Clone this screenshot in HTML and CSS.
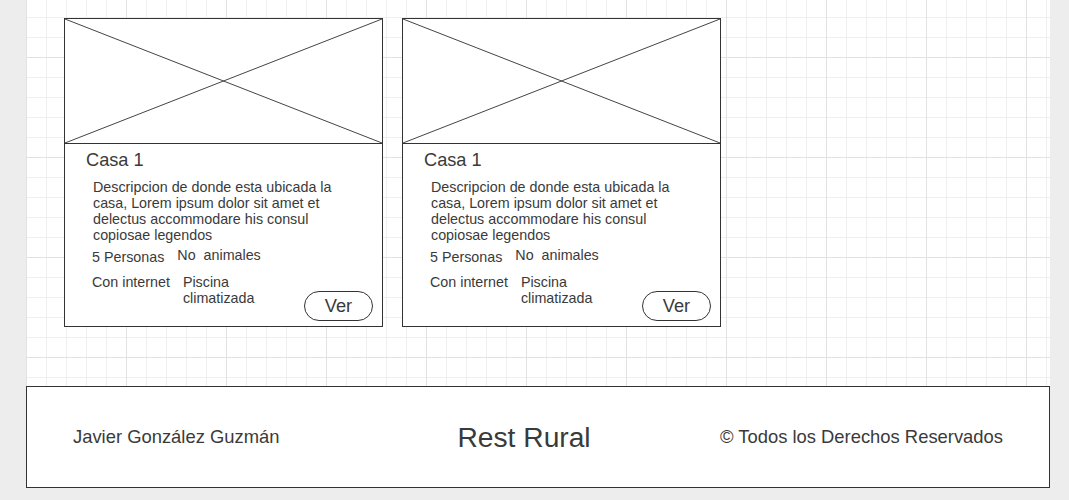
FILE: index.html
```html
<!DOCTYPE html>
<html lang="es">
<head>
<meta charset="utf-8">
<title>Rest Rural</title>
<link rel="stylesheet" href="styles.css">
</head>
<body>
<div class="page">
  <main class="cards">
    <article class="card">
      <div class="thumb">
        <svg viewBox="0 0 100 100" preserveAspectRatio="none" width="100%" height="100%">
          <line x1="0" y1="0" x2="100" y2="100" vector-effect="non-scaling-stroke"/>
          <line x1="100" y1="0" x2="0" y2="100" vector-effect="non-scaling-stroke"/>
        </svg>
      </div>
      <div class="card-body">
        <h2 class="title">Casa 1</h2>
        <p class="desc">Descripcion de donde esta ubicada la casa, Lorem ipsum dolor sit amet et delectus accommodare his consul copiosae legendos</p>
        <div class="row row-one">
          <span class="feat feat-low">5 Personas</span>
          <span class="feat">No&nbsp; animales</span>
        </div>
        <div class="row row-two">
          <span class="feat">Con internet</span>
          <span class="feat feat-wrap">Piscina climatizada</span>
          <button class="btn">Ver</button>
        </div>
      </div>
    </article>
    <article class="card">
      <div class="thumb">
        <svg viewBox="0 0 100 100" preserveAspectRatio="none" width="100%" height="100%">
          <line x1="0" y1="0" x2="100" y2="100" vector-effect="non-scaling-stroke"/>
          <line x1="100" y1="0" x2="0" y2="100" vector-effect="non-scaling-stroke"/>
        </svg>
      </div>
      <div class="card-body">
        <h2 class="title">Casa 1</h2>
        <p class="desc">Descripcion de donde esta ubicada la casa, Lorem ipsum dolor sit amet et delectus accommodare his consul copiosae legendos</p>
        <div class="row row-one">
          <span class="feat feat-low">5 Personas</span>
          <span class="feat">No&nbsp; animales</span>
        </div>
        <div class="row row-two">
          <span class="feat">Con internet</span>
          <span class="feat feat-wrap">Piscina climatizada</span>
          <button class="btn">Ver</button>
        </div>
      </div>
    </article>
  </main>
  <footer class="footer">
    <span class="author">Javier González Guzmán</span>
    <span class="brand">Rest Rural</span>
    <span class="rights">© Todos los Derechos Reservados</span>
  </footer>
</div>
</body>
</html>
```

FILE: styles.css
```css
* { box-sizing: border-box; }

html, body {
  margin: 0;
  padding: 0;
  background: #ededed;
  font-family: "Liberation Sans", Arial, sans-serif;
  color: #3a3a3a;
}

.page {
  margin-left: 26px;
  width: 1024px;
  height: 488px;
  padding-top: 18px;
  display: flex;
  flex-direction: column;
  background-color: #ffffff;
  background-image:
    linear-gradient(to right, #e2e2e2 1px, transparent 1px),
    linear-gradient(to bottom, #e2e2e2 1px, transparent 1px),
    linear-gradient(to right, #efefef 1px, transparent 1px),
    linear-gradient(to bottom, #efefef 1px, transparent 1px);
  background-size: 100px 100px, 100px 100px, 20px 20px, 20px 20px;
  background-position: 0 57px, 0 57px, 0 57px, 0 57px;
}

.cards {
  display: flex;
  gap: 19px;
  padding-left: 38px;
}

.card {
  width: 319px;
  height: 309px;
  border: 1px solid #333333;
  background: #ffffff;
  display: flex;
  flex-direction: column;
}

.thumb {
  height: 125px;
  border-bottom: 1px solid #333333;
}

.thumb svg {
  display: block;
}

.thumb line {
  stroke: #444444;
  stroke-width: 1;
}

.card-body {
  padding: 6px 9px 0 21px;
}

.title {
  margin: 0;
  font-size: 18.2px;
  line-height: 20px;
  font-weight: normal;
}

.desc {
  margin: 9px 0 0 7px;
  width: 252px;
  font-size: 14.3px;
  line-height: 16px;
}

.row {
  display: flex;
  align-items: flex-start;
  gap: 13px;
  margin-left: 6px;
  font-size: 14.3px;
  line-height: 16px;
}

.row-one {
  margin-top: 4px;
}

.feat-low {
  margin-top: 2px;
}

.row-two {
  margin-top: 9px;
}

.feat-wrap {
  width: 82px;
}

.btn {
  margin-left: auto;
  margin-top: 17px;
  width: 69px;
  height: 30px;
  border: 1px solid #333333;
  border-radius: 15px;
  background: #ffffff;
  color: #3a3a3a;
  font-family: "Liberation Sans", Arial, sans-serif;
  font-size: 18.3px;
  line-height: 20px;
  padding: 0;
}

.footer {
  margin-top: 59px;
  height: 102px;
  border: 1px solid #333333;
  background: #ffffff;
  display: flex;
  align-items: center;
  padding: 0 46px;
}

.author {
  font-size: 18.4px;
}

.brand {
  margin-left: 178px;
  font-size: 28.2px;
}

.rights {
  margin-left: auto;
  font-size: 18.4px;
}
```
